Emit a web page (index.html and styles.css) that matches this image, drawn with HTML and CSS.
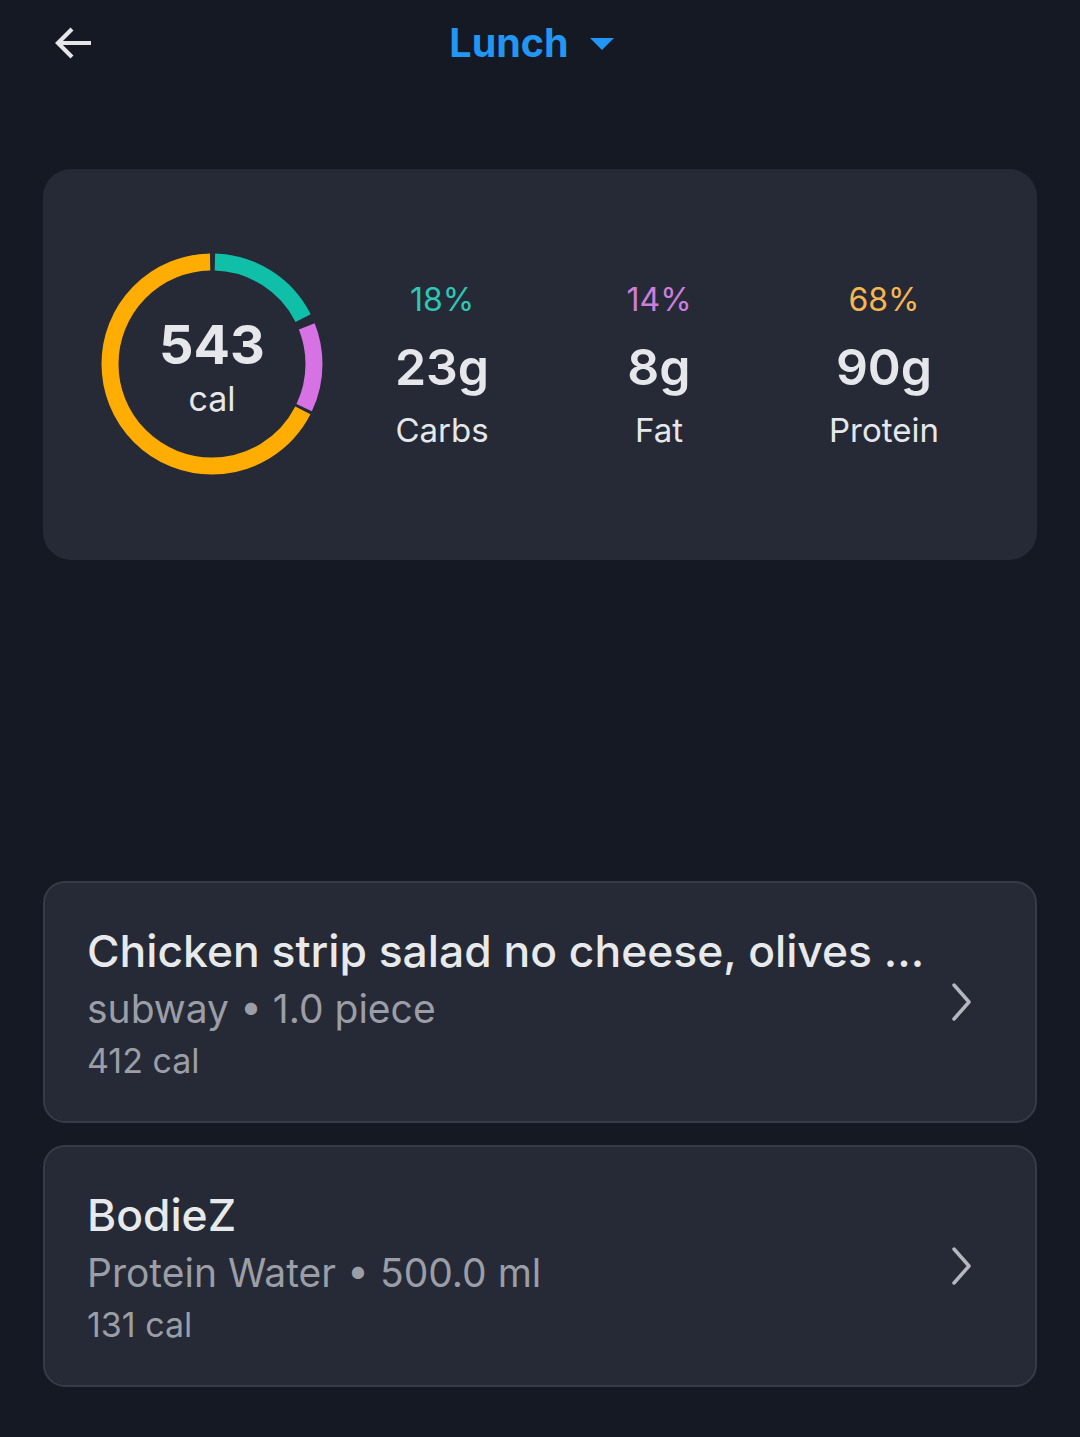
FILE: index.html
```html
<!DOCTYPE html>
<html>
  <head>
    <title>Lunch</title>
    <link rel="stylesheet" href="styles.css">
  </head>
  <body>
    <header class="topbar">
      <button class="back" aria-label="Back">
        <svg width="48" height="48" viewBox="0 0 24 24"><path d="M20.5 12H4.5M11 5l-7 7 7 7" fill="none" stroke="#e6e6e8" stroke-width="2.1"/></svg>
      </button>
      <div class="meal">
        <span>Lunch</span>
        <svg width="26" height="14" viewBox="0 0 26 14"><path d="M1 1h24L13 13z" fill="#2196f3"/></svg>
      </div>
    </header>

    <section class="summary">
      <div class="ring">
        <svg width="222" height="222" viewBox="0 0 222 222">
          <g transform="rotate(-90 111 111)" fill="none" stroke-width="17">
            <circle cx="111" cy="111" r="102" stroke="#10bfa8" stroke-dasharray="109.4 531.5" stroke-dashoffset="-3"/>
            <circle cx="111" cy="111" r="102" stroke="#d672e4" stroke-dasharray="83.7 557.2" stroke-dashoffset="-121.4"/>
            <circle cx="111" cy="111" r="102" stroke="#ffad03" stroke-dasharray="429.8 211.1" stroke-dashoffset="-208.1"/>
          </g>
        </svg>
        <div class="ring-text">
          <div class="cal-num">543</div>
          <div class="cal-unit">cal</div>
        </div>
      </div>
      <div class="macros">
        <div class="macro">
          <div class="pct carbs">18%</div>
          <div class="grams">23g</div>
          <div class="name">Carbs</div>
        </div>
        <div class="macro">
          <div class="pct fat">14%</div>
          <div class="grams">8g</div>
          <div class="name">Fat</div>
        </div>
        <div class="macro">
          <div class="pct protein">68%</div>
          <div class="grams">90g</div>
          <div class="name">Protein</div>
        </div>
      </div>
    </section>

    <div class="items">
      <div class="item">
        <div class="item-text">
          <div class="item-title">Chicken strip salad no cheese, olives ...</div>
          <div class="item-sub">subway • 1.0 piece</div>
          <div class="item-cal">412 cal</div>
        </div>
        <svg class="chev" width="26" height="40" viewBox="0 0 26 40"><path d="M5 3l15 17L5 37" fill="none" stroke="#b4b7be" stroke-width="3.5" stroke-linecap="round" stroke-linejoin="round"/></svg>
      </div>
      <div class="item">
        <div class="item-text">
          <div class="item-title">BodieZ</div>
          <div class="item-sub">Protein Water • 500.0 ml</div>
          <div class="item-cal">131 cal</div>
        </div>
        <svg class="chev" width="26" height="40" viewBox="0 0 26 40"><path d="M5 3l15 17L5 37" fill="none" stroke="#b4b7be" stroke-width="3.5" stroke-linecap="round" stroke-linejoin="round"/></svg>
      </div>
    </div>
  </body>
</html>
```

FILE: styles.css
```css
body {
  margin: 0;
  padding: 0 43px;
  background: #151924;
  font-family: Inter, Roboto, "Noto Sans", sans-serif;
  color: #e8e9eb;
}
.topbar {
  height: 86px;
  display: flex;
  align-items: center;
  justify-content: center;
  position: relative;
}
.back {
  position: absolute;
  left: 7px;
  top: 19px;
  background: none;
  border: none;
  padding: 0;
  width: 48px;
  height: 48px;
}
.meal {
  display: flex;
  align-items: center;
  gap: 20px;
  color: #2196f3;
  font-size: 39.5px;
  font-weight: 700;
  margin-left: -16px;
}
.meal svg {
  margin-top: 2px;
}
.summary {
  margin-top: 83px;
  height: 391px;
  background: #252a36;
  border-radius: 28px;
  display: flex;
  align-items: center;
  padding-left: 58px;
  box-sizing: border-box;
}
.ring {
  position: relative;
  width: 222px;
  height: 222px;
  margin-top: -2px;
}
.ring svg {
  display: block;
}
.ring-text {
  position: absolute;
  inset: 0;
  padding-top: 6px;
  display: flex;
  flex-direction: column;
  align-items: center;
  justify-content: center;
}
.cal-num {
  font-size: 54px;
  font-weight: 700;
  line-height: 60px;
  color: #e6e7ea;
}
.cal-unit {
  font-size: 34px;
  line-height: 40px;
  margin-top: 4px;
  color: #e6e7ea;
}
.macros {
  display: flex;
  margin-left: 14px;
  margin-top: 5px;
}
.macro {
  display: flex;
  flex-direction: column;
  align-items: center;
  width: 210px;
}
.macro:nth-child(2) {
  width: 224px;
}
.macro:nth-child(3) {
  width: 226px;
}
.pct {
  font-size: 32px;
  line-height: 40px;
}
.pct.carbs { color: #2ec6b6; }
.pct.fat { color: #cb7fdc; }
.pct.protein { color: #f9b650; }
.grams {
  font-size: 50px;
  font-weight: 600;
  line-height: 66px;
  margin-top: 14px;
  color: #e6e7ea;
}
.name {
  font-size: 33px;
  line-height: 50px;
  margin-top: 5px;
  color: #e6e7ea;
}
.items {
  margin-top: 321px;
  display: flex;
  flex-direction: column;
  gap: 22px;
}
.item {
  height: 242px;
  box-sizing: border-box;
  background: #252a36;
  border: 2px solid #363b47;
  border-radius: 22px;
  display: flex;
  align-items: center;
  padding: 0 60px 0 42px;
}
.item-text {
  flex: 1;
  margin-top: 2px;
}
.item-title {
  font-size: 44.4px;
  line-height: 58px;
  font-weight: 500;
  color: #e8e9eb;
}
.item-sub {
  font-size: 39px;
  line-height: 58px;
  color: #9b9ea6;
}
.item-cal {
  font-size: 34px;
  line-height: 46px;
  color: #9b9ea6;
}
.chev {
  flex: none;
}
```
